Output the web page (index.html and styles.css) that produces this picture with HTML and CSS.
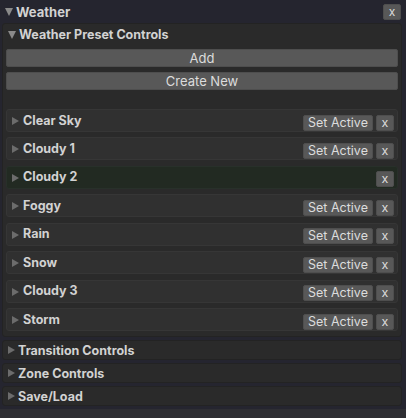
FILE: index.html
```html
<!DOCTYPE html>
<html>
<head>
<meta charset="utf-8">
<link rel="stylesheet" href="styles.css">
</head>
<body>
<div class="window">
  <div class="win-head">
    <span class="tri down"></span>
    <span class="win-title">Weather</span>
    <button class="btn close">x</button>
  </div>
  <div class="panel">
    <div class="panel-head">
      <span class="tri down"></span>
      <span class="panel-title">Weather Preset Controls</span>
    </div>
    <div class="actions">
      <button class="btn wide">Add</button>
      <button class="btn wide">Create New</button>
    </div>
    <div class="presets">
      <div class="preset"><span class="tri right"></span><span class="pname">Clear Sky</span><button class="btn set">Set Active</button><button class="btn x">x</button></div>
      <div class="preset"><span class="tri right"></span><span class="pname">Cloudy 1</span><button class="btn set">Set Active</button><button class="btn x">x</button></div>
      <div class="preset active"><span class="tri right"></span><span class="pname">Cloudy 2</span><button class="btn x">x</button></div>
      <div class="preset"><span class="tri right"></span><span class="pname">Foggy</span><button class="btn set">Set Active</button><button class="btn x">x</button></div>
      <div class="preset"><span class="tri right"></span><span class="pname">Rain</span><button class="btn set">Set Active</button><button class="btn x">x</button></div>
      <div class="preset"><span class="tri right"></span><span class="pname">Snow</span><button class="btn set">Set Active</button><button class="btn x">x</button></div>
      <div class="preset"><span class="tri right"></span><span class="pname">Cloudy 3</span><button class="btn set">Set Active</button><button class="btn x">x</button></div>
      <div class="preset"><span class="tri right"></span><span class="pname">Storm</span><button class="btn set">Set Active</button><button class="btn x">x</button></div>
    </div>
  </div>
  <div class="section"><span class="tri right"></span><span class="panel-title">Transition Controls</span></div>
  <div class="section"><span class="tri right"></span><span class="panel-title">Zone Controls</span></div>
  <div class="section"><span class="tri right"></span><span class="panel-title">Save/Load</span></div>
  <div class="footer"></div>
</div>
</body>
</html>
```
FILE: styles.css
```css
* { box-sizing: border-box; }
html, body { margin: 0; padding: 0; }
body {
  background: #25252f;
  font-family: Inter, "Noto Sans", sans-serif;
  color: #d2d2d2;
  width: 406px;
  height: 418px;
  overflow: hidden;
}
.window { display: flex; flex-direction: column; height: 418px; }
.win-head {
  height: 23px;
  display: flex;
  align-items: center;
  padding: 0 5px 0 5px;
}
.win-title { font-weight: 700; font-size: 13px; margin-left: 3px; flex: 1; }
.tri { width: 0; height: 0; display: inline-block; flex: none; }
.tri.down {
  border-left: 4.5px solid transparent;
  border-right: 4.5px solid transparent;
  border-top: 8px solid #8a8a8a;
}
.tri.right {
  border-top: 4.5px solid transparent;
  border-bottom: 4.5px solid transparent;
  border-left: 7px solid #6c6c6c;
}
.btn {
  font-family: inherit;
  background: #585858;
  color: #dcdcdc;
  border: 1px solid #4e4e4e;
  border-radius: 2px;
  padding: 0;
  font-size: 12.5px;
  line-height: 14px;
}
.close { width: 18px; height: 16px; margin-top: 0; font-size: 12px; }
.panel {
  margin: 0 4px 0 2px;
  background: #2a2a2a;
  border: 1px solid #232323;
  border-radius: 3px;
  height: 314px;
  display: flex;
  flex-direction: column;
}
.panel-head {
  height: 21px;
  display: flex;
  align-items: center;
  padding-left: 5px;
}
.panel-title { font-weight: 700; font-size: 12.5px; margin-left: 3px; }
.actions {
  display: flex;
  flex-direction: column;
  gap: 5px;
  padding: 4px 3px 0 3px;
}
.wide { height: 18px; width: 100%; font-size: 13px; }
.presets {
  display: flex;
  flex-direction: column;
  gap: 5.45px;
  padding: 19px 3px 0 3px;
}
.preset {
  height: 23px;
  display: flex;
  align-items: center;
  background: #303030;
  border: 1px solid #363636;
  border-radius: 3px;
  padding: 1px 3px 0 5px;
}
.preset.active { background: #222a22; border-color: #28302a; }
.pname { font-weight: 700; font-size: 12.5px; margin-left: 4px; flex: 1; margin-top: -2px; }
.set { width: 70px; height: 16px; margin-top: 3px; }
.x { width: 18px; height: 16px; margin-left: 3px; margin-top: 3px; }
.section {
  margin: 3px 4px 0 2px;
  height: 20px;
  display: flex;
  align-items: center;
  background: #2a2a2a;
  border: 1px solid #232323;
  border-radius: 3px;
  padding-left: 5px;
}
.footer { margin-top: 3px; flex: 1; background: #2e2e33; }
```
